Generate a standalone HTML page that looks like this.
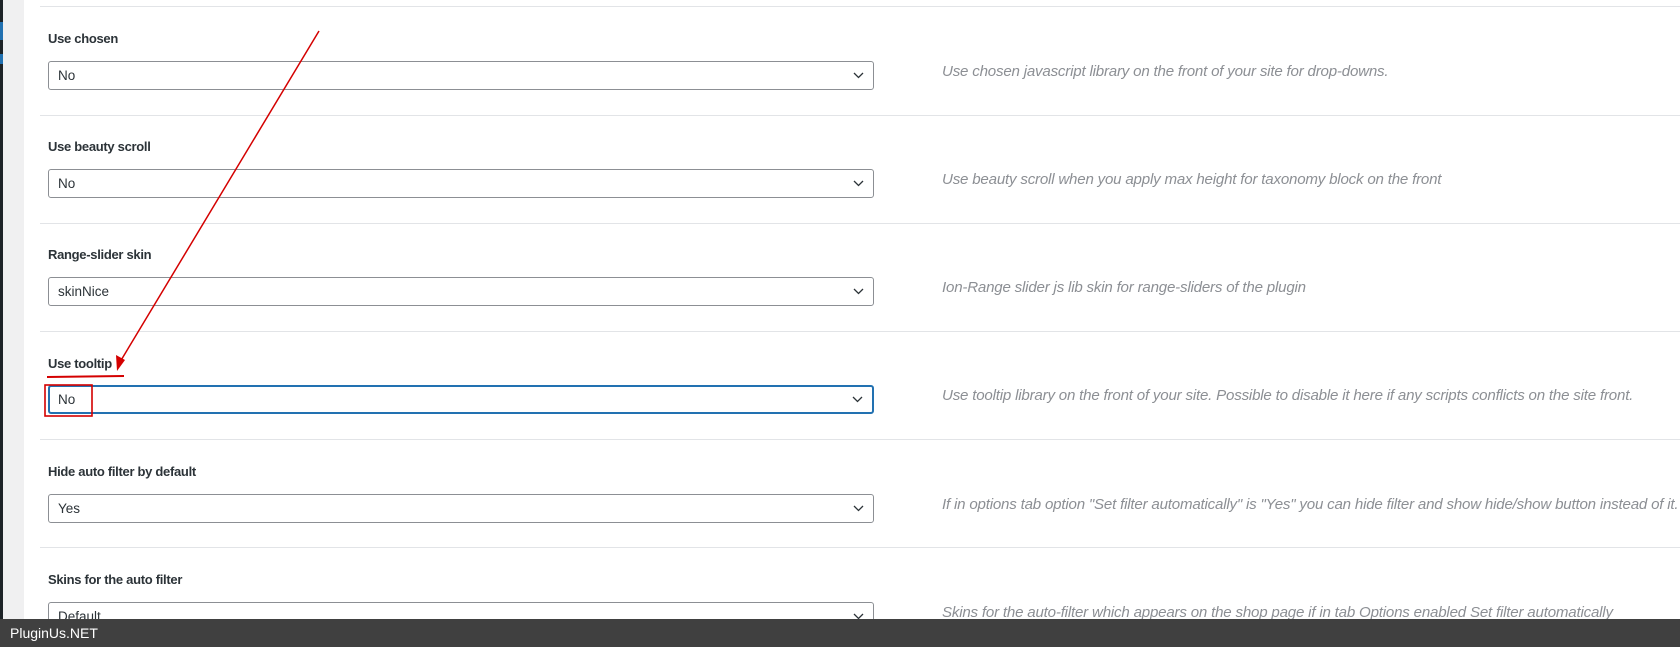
<!DOCTYPE html>
<html><head><meta charset="utf-8"><style>
body{margin:0;width:1680px;height:647px;overflow:hidden;background:#fff;font-family:"Liberation Sans",sans-serif;position:relative}
.side{position:absolute;left:0;top:0;width:24px;height:647px;background:#f0f0f1}
.dark{position:absolute;left:0;top:0;width:3px;height:647px;background:#1d2327}
.sep{position:absolute;left:40px;right:0;height:1px;background:#e2e4e7}
.lbl{position:absolute;left:48px;font-size:13px;font-weight:bold;color:#2c3338;letter-spacing:-0.3px}
.sel{position:absolute;left:48px;width:826px;height:29px;border:1px solid #8c8f94;border-radius:3px;box-sizing:border-box;font-size:13.5px;color:#2c3338;line-height:27px;padding-left:9px}
.sel.f{border:2px solid #2271b1;line-height:25px;padding-left:8px}
.sel svg{position:absolute;right:9px;top:50%;margin-top:-4px}
.desc{position:absolute;left:942px;font-size:15.1px;font-style:italic;color:#8c8f94;white-space:nowrap;letter-spacing:-0.2px}
.foot{position:absolute;left:0;top:619px;width:1680px;height:28px;background:#404040;color:#fff;font-size:14px;line-height:28px;padding-left:10px;box-sizing:border-box}
</style></head><body>
<div class="side"></div><div class="dark"></div>
<div style="position:absolute;left:0;top:22px;width:3px;height:18px;background:#2271b1"></div>
<div style="position:absolute;left:0;top:54px;width:3px;height:10px;background:#2271b1"></div>

<div class="sep" style="top:6px"></div>
<div class="lbl" style="top:31px">Use chosen</div>
<div class="sel" style="top:61px">No<svg width="11" height="7" viewBox="0 0 11 7"><path d="M1 1l4.5 4.5L10 1" fill="none" stroke="#2c3338" stroke-width="1.3"/></svg></div>
<div class="desc" style="top:63px">Use chosen javascript library on the front of your site for drop-downs.</div>

<div class="sep" style="top:115px"></div>
<div class="lbl" style="top:139px">Use beauty scroll</div>
<div class="sel" style="top:169px">No<svg width="11" height="7" viewBox="0 0 11 7"><path d="M1 1l4.5 4.5L10 1" fill="none" stroke="#2c3338" stroke-width="1.3"/></svg></div>
<div class="desc" style="top:171px">Use beauty scroll when you apply max height for taxonomy block on the front</div>

<div class="sep" style="top:223px"></div>
<div class="lbl" style="top:247px">Range-slider skin</div>
<div class="sel" style="top:277px">skinNice<svg width="11" height="7" viewBox="0 0 11 7"><path d="M1 1l4.5 4.5L10 1" fill="none" stroke="#2c3338" stroke-width="1.3"/></svg></div>
<div class="desc" style="top:279px">Ion-Range slider js lib skin for range-sliders of the plugin</div>

<div class="sep" style="top:331px"></div>
<div class="lbl" style="top:356px">Use tooltip</div>
<div class="sel f" style="top:385px">No<svg width="11" height="7" viewBox="0 0 11 7"><path d="M1 1l4.5 4.5L10 1" fill="none" stroke="#2c3338" stroke-width="1.3"/></svg></div>
<div class="desc" style="top:387px">Use tooltip library on the front of your site. Possible to disable it here if any scripts conflicts on the site front.</div>

<div class="sep" style="top:439px"></div>
<div class="lbl" style="top:464px">Hide auto filter by default</div>
<div class="sel" style="top:494px">Yes<svg width="11" height="7" viewBox="0 0 11 7"><path d="M1 1l4.5 4.5L10 1" fill="none" stroke="#2c3338" stroke-width="1.3"/></svg></div>
<div class="desc" style="top:496px">If in options tab option "Set filter automatically" is "Yes" you can hide filter and show hide/show button instead of it.</div>

<div class="sep" style="top:547px"></div>
<div class="lbl" style="top:572px">Skins for the auto filter</div>
<div class="sel" style="top:602px">Default<svg width="11" height="7" viewBox="0 0 11 7"><path d="M1 1l4.5 4.5L10 1" fill="none" stroke="#2c3338" stroke-width="1.3"/></svg></div>
<div class="desc" style="top:604px">Skins for the auto-filter which appears on the shop page if in tab Options enabled Set filter automatically</div>

<svg style="position:absolute;left:0;top:0" width="1680" height="647">
<line x1="319" y1="31" x2="120" y2="362" stroke="#d40000" stroke-width="1.5"/>
<path d="M117 371 L116 355 L125 360 Z" fill="#d40000"/>
<line x1="47" y1="377" x2="124" y2="376" stroke="#d40000" stroke-width="2"/>
<rect x="45" y="385" width="47" height="31" fill="none" stroke="#d40000" stroke-width="1.6"/>
</svg>
<div class="foot">PluginUs.NET</div>
</body></html>
